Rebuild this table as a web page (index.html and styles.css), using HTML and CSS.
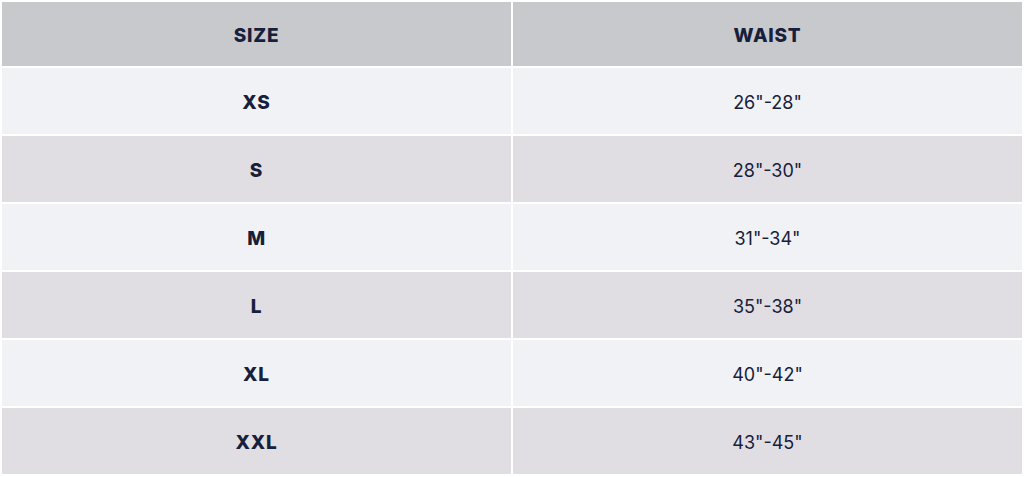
FILE: index.html
```html
<!DOCTYPE html>
<html lang="en">
<head>
<meta charset="utf-8">
<title>Size Chart</title>
<link rel="stylesheet" href="styles.css">
</head>
<body>
<table class="size-table">
  <thead>
    <tr class="head-row"><th>SIZE</th><th>WAIST</th></tr>
  </thead>
  <tbody>
    <tr class="body-row"><td class="size">XS</td><td>26"-28"</td></tr>
    <tr class="body-row"><td class="size">S</td><td>28"-30"</td></tr>
    <tr class="body-row"><td class="size">M</td><td>31"-34"</td></tr>
    <tr class="body-row"><td class="size">L</td><td>35"-38"</td></tr>
    <tr class="body-row"><td class="size">XL</td><td>40"-42"</td></tr>
    <tr class="body-row"><td class="size">XXL</td><td>43"-45"</td></tr>
  </tbody>
</table>
</body>
</html>
```

FILE: styles.css
```css
html, body {
  margin: 0;
  padding: 0;
  background: #ffffff;
}
.size-table {
  width: 1024px;
  border-collapse: separate;
  border-spacing: 2px;
  table-layout: fixed;
  font-family: Inter, "Liberation Sans", sans-serif;
  color: #17203a;
}
.head-row {
  height: 64px;
}
.body-row {
  height: 66px;
}
.size-table th {
  padding: 3px 0 0;
  background: #c8c9cd;
  font-size: 19px;
  font-weight: 800;
  letter-spacing: 0.8px;
  text-align: center;
  vertical-align: middle;
}
.size-table td {
  padding: 2px 0 0;
  font-size: 18px;
  text-align: center;
  vertical-align: middle;
}
.size-table td.size {
  font-size: 19px;
  font-weight: 800;
  letter-spacing: 0.8px;
}
.size-table tbody tr:nth-child(odd) td {
  background: #f1f2f5;
}
.size-table tbody tr:nth-child(even) td {
  background: #e0dee3;
}
```
